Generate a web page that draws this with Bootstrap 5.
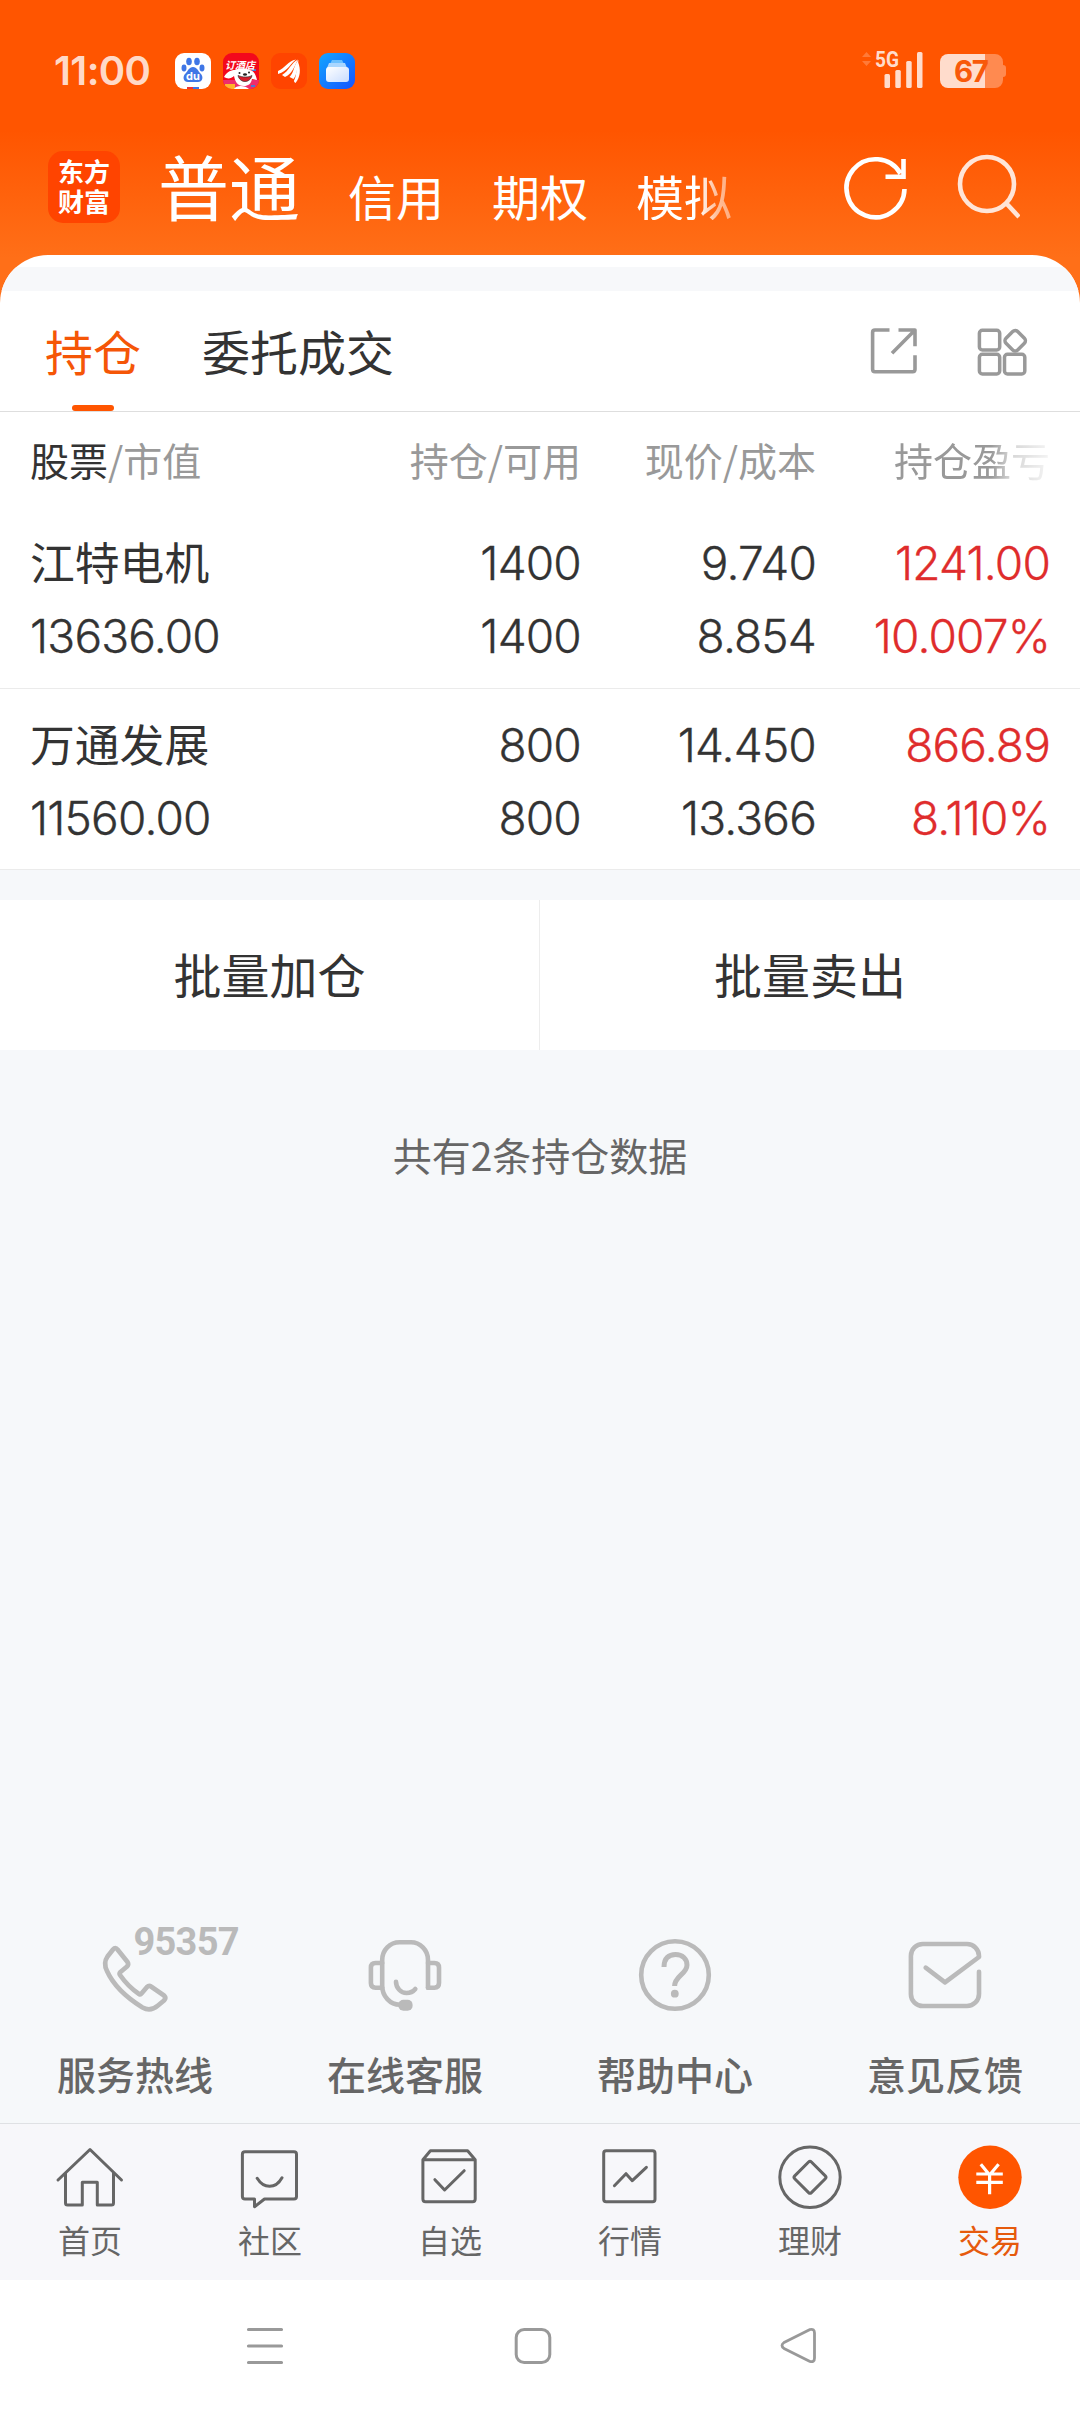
<!DOCTYPE html>
<html lang="zh-CN">
<head>
<meta charset="utf-8">
<meta name="viewport" content="width=device-width, initial-scale=1">
<title>持仓</title>
<link href="https://cdn.jsdelivr.net/npm/bootstrap@5.3.0/dist/css/bootstrap.min.css" rel="stylesheet">
<style>
  body { width: 1080px; height: 2412px; margin: 0; overflow: hidden; color: #333; font-family: "Noto Sans CJK SC", sans-serif; font-weight: 400; font-size: 39px; line-height: 1; background: #f6f8fa; }
  svg { display: block; flex: none; }
  .ln { fill: none; stroke: currentColor; stroke-linecap: round; stroke-linejoin: round; }
  .top-zone { height: 412px; background: linear-gradient(#f50 0 130px, #ff6f18 258px); }
  .status { height: 141px; padding: 0 74px 0 54px; }
  .clock { font: 600 40px/35px Inter, sans-serif; color: rgba(255,255,255,.8); width: 121px; letter-spacing: -.6px; margin-top: 53px; }
  .app-icons { gap: 12px; margin-top: 53px; }
  .signal { margin-top: 46px; }
  .brand-row { height: 114px; padding: 0 60px 0 48px; color: #fff; }
  .logo { width: 72px; height: 72px; border-radius: 15px; background: #f40; font-weight: 700; font-size: 26px; line-height: 30px; padding: 5px 10px; margin-top: 10px; }
  .acct { height: 72px; margin: 7px 0 0 38px; gap: 48px; font-size: 48px; line-height: 50px; width: 576px; }
  .acct .on { font-size: 71px; line-height: 72px; }
  .fade-acct { -webkit-mask-image: linear-gradient(90deg,#000 62px,rgba(0,0,0,.6) 80px,rgba(0,0,0,.45)); }
  .tool { margin-top: 7px; }
  .sheet { height: 157px; border-radius: 48px 48px 0 0; overflow: hidden; background: #fff; }
  .strip { height: 24px; margin-top: 12px; background: #f7f8fa; }
  .subtabs { height: 121px; border-bottom: 1px solid #dedede; padding: 0 51px 0 45px; font-size: 48px; }
  .subtabs .cell { height: 120px; line-height: 118px; position: relative; }
  .subtabs .on { color: #f55607; margin-right: 61px; }
  .subtabs .on::after { content: ""; position: absolute; left: 27px; bottom: 0; width: 42px; height: 6px; border-radius: 3px; background: #f50; }
  .grey-ic { color: #999; }
  .hold { display: grid; grid-template-columns: 316px 235px 235px 234px; padding: 0 30px; background: #fff; }
  .hold > div:not(:first-child) { text-align: right; }
  .hold-head { height: 102px; line-height: 95px; color: #999; }
  .hold-head b { font-weight: 400; color: #333; }
  .fade-col { -webkit-mask-image: linear-gradient(90deg,#000 175px,rgba(0,0,0,.4) 195px,rgba(0,0,0,.1) 234px); }
  .pos { height: 175px; padding-top: 12px; border-bottom: 1px solid #ebebeb; font: 300 46px/74px Inter, sans-serif; letter-spacing: -.8px; -webkit-text-stroke: .35px currentColor; }
  .pos + .pos { height: 181px; padding-top: 19px; }
  .pos .nm { font-family: "Noto Sans CJK SC", sans-serif; font-weight: 400; letter-spacing: 0; font-size: 44.8px; height: 73px; line-height: 69px; -webkit-text-stroke: 0; }
  .pos span { display: block; height: 73px; }
  .pos > .up { color: #df2c2c; }
  .batch { height: 150px; margin-top: 30px; background: #fff; font-size: 48px; line-height: 147px; text-align: center; }
  .batch > div:first-child { border-right: 1px solid #ededed; }
  .total { color: #666; margin-top: 84px; line-height: 40px; }
  .svc { color: #bababa; }
  .svc p { color: #666; font-weight: 500; line-height: 40px; margin: 33px 0 30px; }
  .tabbar { height: 157px; border-top: 1px solid #dfe1e4; background: #f7f7fa; color: #666; font-size: 32px; }
  .tabbar svg { margin: 18px auto 9px; }
  .tabbar .on { color: #e65a0c; }
  .sysnav { height: 132px; background: #fff; color: #999; padding-left: 242px; }
</style>
</head>
<body class="d-flex flex-column">
<header class="top-zone flex-shrink-0">
  <div class="status d-flex align-items-start">
    <div class="clock">11:00</div>
    <div class="app-icons d-flex">
      <svg width="36" height="36" viewBox="0 0 36 36"><rect width="36" height="36" rx="9" fill="#fff"/><g fill="#3f76e6"><ellipse cx="14" cy="8.500" rx="2.800" ry="3.800"/><ellipse cx="22" cy="8.500" rx="2.800" ry="3.800"/><ellipse cx="9" cy="15" rx="2.500" ry="3.400"/><ellipse cx="27" cy="15" rx="2.500" ry="3.400"/><path d="M18 14c4 0 5 4 7.500 6.500C29 24 27.500 29 23 29H13c-4.500 0-6-5-2.500-8.500C13 18 14 14 18 14z"/></g><text x="18" y="27" fill="#fff" text-anchor="middle" font-family="Inter" font-weight="700" font-size="11">du</text><path d="M12 35h6" stroke="#e33" stroke-width="2"/><path d="M18 35h6" stroke="#3f76e6" stroke-width="2"/></svg>
      <svg width="36" height="36" viewBox="0 0 36 36"><defs><clipPath id="c1"><rect width="36" height="36" rx="9"/></clipPath></defs><g clip-path="url(#c1)"><rect width="36" height="36" fill="#f3081c"/><rect y="27" width="36" height="9" fill="#ee2d6c"/><path d="M1 24c3-6 8-7 11-7 3-2 11-2 15 0 4 1 6 5 7 10l-5-1c-1 5-4 7-8 7-7 0-9-5-10-10-3 3-7 3-10 1z" fill="#fff"/><path d="M15 22.500c5 2 10 2 14 0-1 4-4 6-7 6s-6-2-7-6z" fill="#d51d2c" stroke="#333" stroke-width=".7"/><circle cx="16.500" cy="20" r="1" fill="#222"/><circle cx="26" cy="19.500" r="1" fill="#222"/><ellipse cx="22" cy="21.500" rx="2" ry="1.200" fill="#222"/><rect x="2" y="31" width="10" height="5" fill="#ffb52a"/><path d="M11 36c2-4 11-4 15 0z" fill="#fff"/><path d="M29 17h4M28 33h4" stroke="#4a7bd0" stroke-width="2"/><text x="2" y="15.500" fill="#fff" font-family="Noto Sans CJK SC" font-style="italic" font-weight="700" font-size="10">订酒店</text></g></svg>
      <svg width="36" height="36" viewBox="0 0 36 36"><rect width="36" height="36" rx="9" fill="#f40"/><g fill="#fff"><path d="M7 18C14 15 17 8 25 6.500 20 10 17 18 7 21z"/><path d="M11 22C18 18 20 10 27 6.500c-3 5-5 14-13 17.500z"/><path d="M18.500 24C23.500 19 22.500 12 27.500 7c-1 5-1 14-5 19z"/><path d="M24.500 30c-1.500-1-2-2-1-3.500C26 21 25 14.500 27 9c3 7 2.500 15-2.500 21z"/></g></svg>
      <svg width="36" height="36" viewBox="0 0 36 36"><defs><linearGradient id="g1" x1="0" y1="0" x2="1" y2="1"><stop stop-color="#13a6ff"/><stop offset="1" stop-color="#1553ff"/></linearGradient><linearGradient id="g2" x1="0" y1="0" x2="1" y2="1"><stop stop-color="#fff"/><stop offset="1" stop-color="#c8dcff"/></linearGradient></defs><rect width="36" height="36" rx="9" fill="url(#g1)"/><path d="M13 7h10l2 4H11z" fill="#6cc0ff"/><path d="M10 10h16l2 5H8z" fill="#a9d6ff"/><rect x="7" y="14" width="23" height="15" rx="3" fill="url(#g2)"/></svg>
    </div>
    <svg class="signal ms-auto" width="146" height="48" viewBox="860 46 146 48"><g fill="#fff" fill-opacity=".22"><path d="M862 57l4.500-5 4.500 5zM862 61l4.500 5 4.500-5z"/></g><g fill="#ffdccc"><text x="875" y="66.500" font-family="Roboto" font-weight="700" font-size="21.500" textLength="24" lengthAdjust="spacingAndGlyphs">5G</text><rect x="884.500" y="74" width="5.500" height="14" rx="1.500"/><rect x="895.300" y="70" width="5.500" height="18" rx="1.500"/><rect x="906.200" y="61" width="5.500" height="27" rx="1.500"/><rect x="917" y="52" width="5.500" height="36" rx="1.500"/></g><path d="M985 54h10a8 8 0 0 1 8 8v3q3 0 3 3v6q0 3-3 3v3a8 8 0 0 1-8 8h-10z" fill="#ff8a50"/><path d="M985 54v34h-37a8 8 0 0 1-8-8V62a8 8 0 0 1 8-8z" fill="#ffdccc"/><text x="954" y="82" font-family="Inter" font-weight="700" font-size="29.500" fill="#f8590a" textLength="35">67</text></svg>
  </div>
  <div class="brand-row d-flex align-items-start">
    <div class="logo flex-shrink-0">东方<br>财富</div>
    <nav class="acct d-flex align-items-end flex-shrink-0 text-nowrap"><span class="on">普通</span><span>信用</span><span>期权</span><span class="fade-acct">模拟</span></nav>
    <svg class="tool ms-auto" width="70" height="78" viewBox="841 148 70 78"><path d="M904.500 189a29 29 0 1 1-4-15.500M885.500 176.800H903.500V159" fill="none" stroke="#fff" stroke-width="4.600"/></svg>
    <svg class="tool" style="margin-left:43px" width="66" height="78" viewBox="954 148 66 78"><circle cx="987" cy="184" r="27" fill="none" stroke="#ffe5d8" stroke-width="4.600"/><path d="M1006 203l13 14" stroke="#ffe5d8" stroke-width="4.600"/></svg>
  </div>
  <div class="sheet">
    <div class="strip"></div>
    <div class="subtabs d-flex align-items-center">
      <div class="cell on">持仓</div><div class="cell">委托成交</div>
      <svg class="grey-ic ms-auto" width="58" height="58" viewBox="0 0 58 58"><path class="ln" stroke-width="3.600" style="stroke-linecap:butt" d="M24.500 8H10Q7.600 8 7.600 10.400V47.300q0 2.400 2.400 2.400H47.600q2.400 0 2.400-2.400V33.300M33.500 8H50V24.300M50 8L27 31.300"/></svg>
      <svg class="grey-ic" style="margin-left:48px" width="58" height="58" viewBox="0 0 58 58"><g class="ln" stroke-width="3.500"><rect x="8.400" y="8.300" width="20.300" height="19.700" rx="3"/><rect x="8.400" y="32.300" width="20.300" height="19.700" rx="3"/><rect x="33.500" y="32.300" width="20.300" height="19.700" rx="3"/><rect x="36" y="10.500" width="16.500" height="16.500" rx="3.500" transform="rotate(45 44.200 18.700)"/></g></svg>
    </div>
  </div>
</header>
<main class="flex-grow-1 d-flex flex-column">
  <div class="hold hold-head"><div><b>股票</b>/市值</div><div>持仓/可用</div><div>现价/成本</div><div class="fade-col">持仓盈亏</div></div>
  <div class="hold pos"><div><span class="nm">江特电机</span><span>13636.00</span></div><div><span>1400</span><span>1400</span></div><div><span>9.740</span><span>8.854</span></div><div class="up"><span>1241.00</span><span>10.007%</span></div></div>
  <div class="hold pos"><div><span class="nm">万通发展</span><span>11560.00</span></div><div><span>800</span><span>800</span></div><div><span>14.450</span><span>13.366</span></div><div class="up"><span>866.89</span><span>8.110%</span></div></div>
  <div class="batch d-flex"><div class="col-6">批量加仓</div><div class="col-6">批量卖出</div></div>
  <div class="total text-center">共有2条持仓数据</div>
  <div class="svc row g-0 text-center mt-auto">
    <div class="col-3"><svg width="270" height="100" viewBox="0 0 270 100"><path class="ln" stroke-width="4.700" d="M113 29.500Q115.500 26.500 117.500 29.500L127.500 42Q129 44.500 127 46.500L120.500 52Q119 53.500 120 55Q128 66.500 139 74Q140.500 75 141.500 73.500L147 67Q149 65 151 66.500L164 75.500Q166.500 78 164 80.500L158 85.500Q150.500 92 142.500 87.500Q116 71 107 51Q103 43 107.500 36.500Z"/><text x="133.500" y="34.500" font-family="Roboto" font-weight="700" font-size="38" fill="currentColor" textLength="106">95357</text></svg><p>服务热线</p></div>
    <div class="col-3"><svg width="270" height="100" viewBox="0 0 270 100"><g class="ln" stroke-width="4.600"><path d="M158 67.700V40C158 30 150 22.300 141 22.300H129.500C120 22.300 112.200 30 112.200 40V66C112.200 76 120 84.700 130 84.700"/><path d="M112.200 43H105.500Q100.900 43 100.900 47.600V63Q100.900 67.700 105.500 67.700H112.200M158 43H164.400Q169 43 169 47.600V63Q169 67.700 164.400 67.700H158"/><path d="M126 61.700C126 68 131 73 136.500 73Q142 73 145.300 69"/></g><rect x="128.400" y="79.700" width="14.200" height="11" rx="5" fill="currentColor"/></svg><p>在线客服</p></div>
    <div class="col-3"><svg width="270" height="100" viewBox="0 0 270 100"><circle class="ln" stroke-width="4.600" cx="135" cy="55" r="33.800"/><path class="ln" style="stroke-linecap:butt" stroke-width="5" d="M124 47C124 38 129 34.500 135.500 34.500C142.500 34.500 147 39 147 45C147 54 134.600 56 134.600 66"/><circle cx="134.800" cy="73.700" r="3.900" fill="currentColor"/></svg><p>帮助中心</p></div>
    <div class="col-3"><svg width="270" height="100" viewBox="0 0 270 100"><path class="ln" stroke-width="4.600" d="M169 51.700V74A12 12 0 0 1 157 86H113A12 12 0 0 1 100.900 74V36A12 12 0 0 1 113 24H157A12 12 0 0 1 169 36V37L135 62.300L115.700 47.700"/></svg><p>意见反馈</p></div>
  </div>
</main>
<nav class="tabbar d-flex text-center flex-shrink-0">
  <div class="col-2"><svg width="72" height="72" viewBox="0 0 72 72"><path class="ln" stroke-width="3" d="M4 38L36 7.500L67.500 38M11.500 31V61q0 2 2 2H28.300V40.300H43.300V63H57.500q2 0 2-2V31"/></svg>首页</div>
  <div class="col-2"><svg width="72" height="72" viewBox="0 0 72 72"><path class="ln" stroke-width="3" d="M11 9.700H60q2.500 0 2.500 2.500V54.500q0 2.500-2.500 2.500H30.500L20.500 64.700V57H11q-2.600 0-2.600-2.500V12.200q0-2.500 2.600-2.500zM23.200 36.300Q28 44.300 35.600 44.300T48 35.700"/></svg>社区</div>
  <div class="col-2"><svg width="72" height="72" viewBox="0 0 72 72"><path class="ln" stroke-width="3" d="M8.900 17.700L16.400 8.700H53.600L61.200 17.700V57q0 2.700-2.700 2.700H11.600q-2.700 0-2.700-2.700zH61.200M20.900 37.700L30.600 48L50.200 28.700"/></svg>自选</div>
  <div class="col-2"><svg width="72" height="72" viewBox="0 0 72 72"><g class="ln" stroke-width="3"><rect x="9.700" y="8.700" width="51.300" height="51" rx="2.500"/><path d="M20.400 43.700L32 31.700L38.300 38.700L52.400 25.300"/></g></svg>行情</div>
  <div class="col-2"><svg width="72" height="72" viewBox="0 0 72 72"><g class="ln" stroke-width="3"><circle cx="36" cy="35.300" r="30.200"/><rect x="24.200" y="23.500" width="23.600" height="23.600" rx="2" transform="rotate(45 36 35.300)"/></g></svg>理财</div>
  <div class="col-2 on"><svg width="72" height="72" viewBox="0 0 72 72"><circle cx="36" cy="35.300" r="31.700" fill="#f50"/><path d="M26.800 22.300L35.600 33L44.600 22.300M22.300 32H48.800M22.300 40.300H48.800M35.600 32V52.300" fill="none" stroke="#fff" stroke-width="3.200"/></svg>交易</div>
</nav>
<footer class="sysnav d-flex align-items-center flex-shrink-0">
  <svg width="46" height="46" viewBox="0 0 46 46"><path class="ln" stroke-width="3.200" d="M6.500 6.500H39.500M6.500 23H39.500M6.500 39.500H39.500"/></svg>
  <svg style="margin-left:222px" width="46" height="46" viewBox="0 0 46 46"><rect class="ln" stroke-width="3" x="6.200" y="6.500" width="33.600" height="33" rx="8"/></svg>
  <svg style="margin-left:220px" width="46" height="46" viewBox="0 0 46 46"><path class="ln" stroke-width="2.800" d="M34 6.500L8 19.500Q4 22.500 8 25.500L34 38.500Q38.500 39.500 38.500 35V10Q38.500 5.500 34 6.500z"/></svg>
</footer>
<script src="https://cdn.jsdelivr.net/npm/bootstrap@5.3.0/dist/js/bootstrap.bundle.min.js"></script>
</body>
</html>
